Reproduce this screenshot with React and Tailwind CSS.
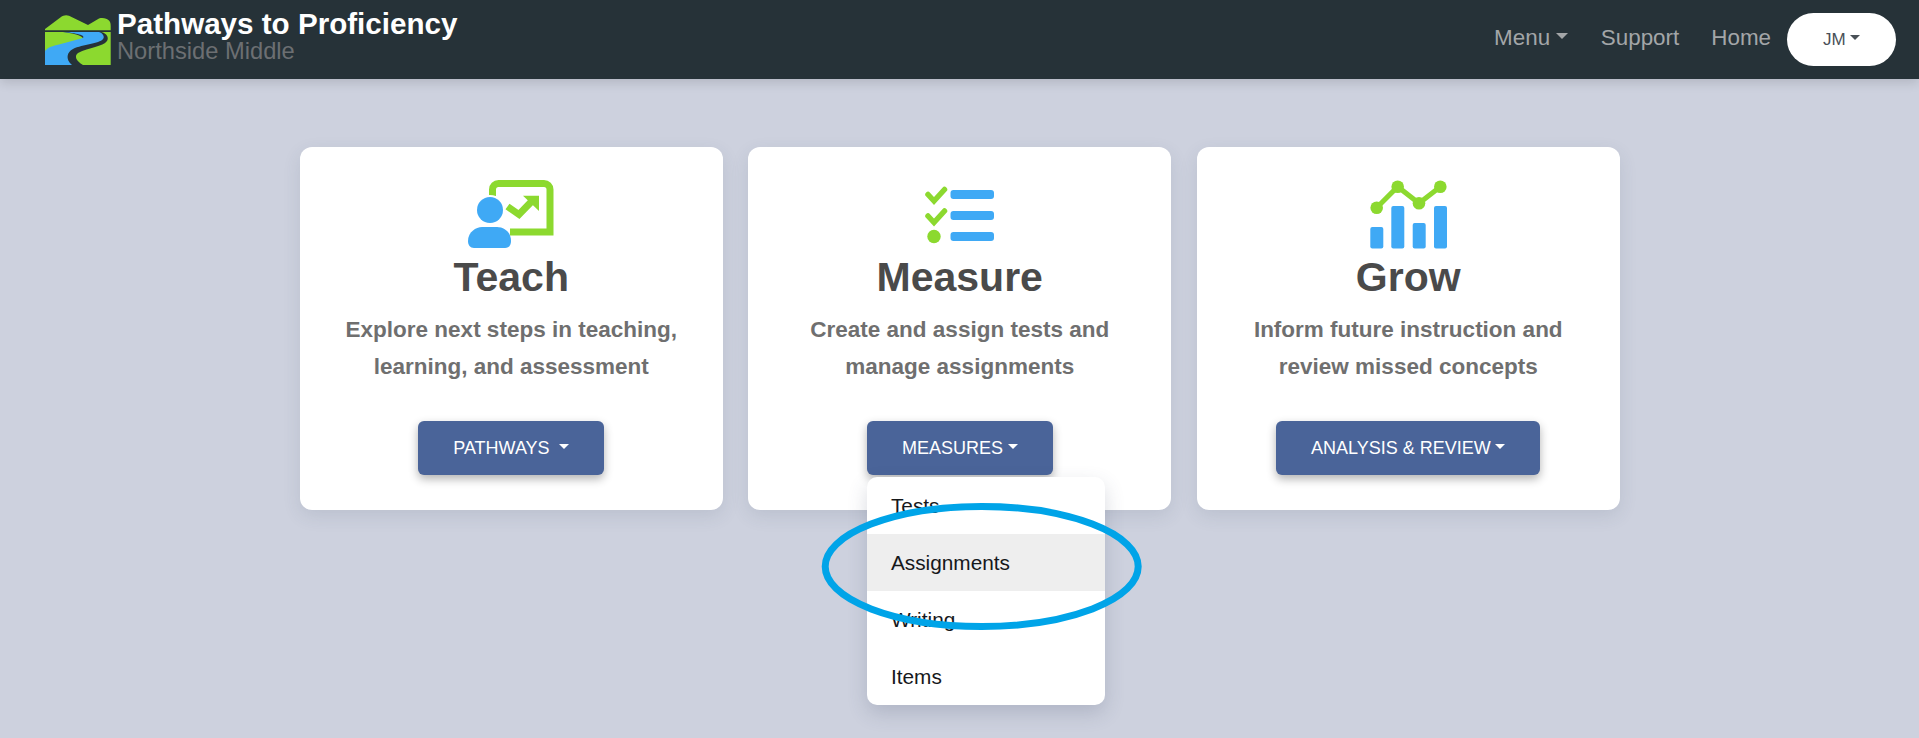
import React from "react";

const Caret = ({ className = "" }) => (
    <span className={`inline-block align-[0.255em] ml-[0.255em] border-t-[0.3em] border-x-[0.3em] border-x-transparent border-t-current ${className}`} />
);

const TeachIcon = () => (
    <svg width="86" height="68" viewBox="0 0 86 68">
        <path d="M24.5 16V9.5a6 6 0 0 1 6-6H76a6 6 0 0 1 6 6V52H42" fill="none" stroke="#8cd92f" strokeWidth="7" />
        <path d="M39.5 26.5L51 34.5L65 20" fill="none" stroke="#8cd92f" strokeWidth="7" />
        <path d="M55 15.7H71V31Z" fill="#8cd92f" />
        <circle cx="22" cy="30" r="15" fill="#ffffff" />
        <circle cx="22" cy="30" r="13" fill="#3fa9f5" />
        <path d="M0 61C0 52 8 47 14 47H29C36 47 43 52 43 61C43 65 41 68 37 68H6C2 68 0 65 0 61Z" fill="#3fa9f5" />
    </svg>
);

const MeasureIcon = () => (
    <svg width="71" height="60" viewBox="25 18 71 60">
        <path d="M29 28.5L35 35L45.5 23.5" fill="none" stroke="#8cd92f" strokeWidth="5.5" strokeLinecap="round" />
        <path d="M29 50L35 56.5L45.5 45" fill="none" stroke="#8cd92f" strokeWidth="5.5" strokeLinecap="round" />
        <circle cx="35" cy="70.5" r="6.7" fill="#8cd92f" />
        <rect x="51.5" y="24" width="43.5" height="9" rx="3" fill="#3fa9f5" />
        <rect x="51.5" y="45" width="43.5" height="9" rx="3" fill="#3fa9f5" />
        <rect x="51.5" y="66" width="43.5" height="9" rx="3" fill="#3fa9f5" />
    </svg>
);

const GrowIcon = () => (
    <svg width="77" height="69" viewBox="20 15 77 69">
        <rect x="20.3" y="62" width="13" height="21.5" rx="2" fill="#3fa9f5" />
        <rect x="41.3" y="41" width="13" height="42.5" rx="2" fill="#3fa9f5" />
        <rect x="62.7" y="58" width="13" height="25.5" rx="2" fill="#3fa9f5" />
        <rect x="84" y="41" width="13" height="42.5" rx="2" fill="#3fa9f5" />
        <path d="M26.7 42.7L47.7 21.7L69 38.3L90.3 21.7" fill="none" stroke="#8cd92f" strokeWidth="5" />
        <circle cx="26.7" cy="42.7" r="6.3" fill="#8cd92f" />
        <circle cx="47.7" cy="21.7" r="6.3" fill="#8cd92f" />
        <circle cx="69" cy="38.3" r="6.3" fill="#8cd92f" />
        <circle cx="90.3" cy="21.7" r="6.3" fill="#8cd92f" />
    </svg>
);

// coordinates are taken from the 3x crop of the logo, divided by 3
const Logo = () => (
    <svg width="66" height="50" viewBox="0 0 66 50">
        <path d="M0 14L16 2C18 0.5 21 -0.5 24 0.8L43 10L54 3.5C58 2.5 62 3.5 64 5.5C65.5 7 65.7 9 65.7 11V15.3H0Z" fill="#8cd92f" />
        <path d="M0 17H65.7V50H0Z" fill="#8cd92f" />
        <path d="M18 17H56C62 18 64 23 62 26C58 32 44 32 33 38C29 41 31 46 38 50H24C18 44 19 38 26 34C34 29 42 28 38 23C36 20 26 18 18 17Z" fill="#263238" />
        <path d="M0 36C3 32 8 31 14 29.5L38 23C40 21 36 18.5 18 17H54C58 18 60 22 58 24C54 29 38 29 28 34C22 37 20 44 27 50H0Z" fill="#3fa9f5" />
    </svg>
);

const cards = [
    { title: "Teach", lines: ["Explore next steps in teaching,", "learning, and assessment"], button: "PATHWAYS", gap: true, icon: <TeachIcon /> },
    { title: "Measure", lines: ["Create and assign tests and", "manage assignments"], button: "MEASURES", icon: <MeasureIcon />, menu: true },
    { title: "Grow", lines: ["Inform future instruction and", "review missed concepts"], button: "ANALYSIS & REVIEW", icon: <GrowIcon /> },
];

const menuItems = ["Tests", "Assignments", "Writing", "Items"];

const Card = ({ card }) => (
    <div className="w-[423px] h-[363px] bg-white rounded-[12px] shadow-[0_6px_18px_rgba(60,70,100,0.12)] flex flex-col items-center pt-[33px]">
        <div className="h-[68px] flex items-center justify-center">{card.icon}</div>
        <h2 className="text-[41px] leading-[48px] font-bold text-[#4a4a4a] mt-[5px]">{card.title}</h2>
        <p className="text-[22.5px] leading-[36.5px] font-bold text-[#6f6f6f] text-center mt-[11px]">
            {card.lines[0]}<br />{card.lines[1]}
        </p>
        <div className="relative mt-[36px]">
            <button className="h-[54px] px-[35px] bg-[#4a6499] text-white text-[18px] rounded-[6px] shadow-[0_4px_10px_rgba(0,0,0,0.3)] whitespace-nowrap">
                {card.button}{card.gap ? " " : ""}<Caret />
            </button>
            {card.menu && (
                <div className="absolute z-10 left-0 top-[56px] w-[238px] bg-white rounded-[10px] shadow-[0_8px_20px_rgba(60,70,100,0.2)] overflow-hidden">
                    {menuItems.map((item) => (
                        <div key={item} className={`h-[57px] flex items-center px-[24px] text-[20.8px] text-[#16181b] ${item === "Assignments" ? "bg-[#eeeeee]" : ""}`}>
                            {item}
                        </div>
                    ))}
                </div>
            )}
            {card.menu && (
                <svg className="absolute z-20 left-[-46px] top-[82px] pointer-events-none" width="322" height="128" viewBox="0 0 322 128">
                    <ellipse cx="160.7" cy="63.5" rx="156.5" ry="60" fill="none" stroke="#00a4e8" strokeWidth="7" />
                </svg>
            )}
        </div>
    </div>
);

export default function App() {
    return (
        <div className="min-h-screen bg-[#cdd1de] overflow-hidden font-['Liberation_Sans',Arial,sans-serif]">
            <nav className="h-[79px] bg-[#263238] flex items-center pl-[45px] pr-[23px] shadow-[0_4px_10px_rgba(0,0,0,0.12)]">
                <Logo />
                <div className="ml-[6px] -mt-[5px]">
                    <div className="text-[29.6px] leading-[29px] font-bold text-white">Pathways to Proficiency</div>
                    <div className="text-[23.7px] leading-[27px] text-[#6c6f72]">Northside Middle</div>
                </div>
                <div className="ml-auto flex items-center text-[22.4px] text-[#a3a6a8]">
                    <a className="-mt-[3px]">Menu<Caret /></a>
                    <a className="ml-[33px] -mt-[3px]">Support</a>
                    <a className="ml-[32px] -mt-[3px]">Home</a>
                    <button className="ml-[16px] w-[109px] h-[53px] rounded-full bg-white text-[17px] text-[#495057]">JM<Caret /></button>
                </div>
            </nav>
            <main className="flex justify-center gap-[25.5px] pt-[68px] pl-[0.5px]">
                {cards.map((card) => <Card key={card.title} card={card} />)}
            </main>
        </div>
    );
}
